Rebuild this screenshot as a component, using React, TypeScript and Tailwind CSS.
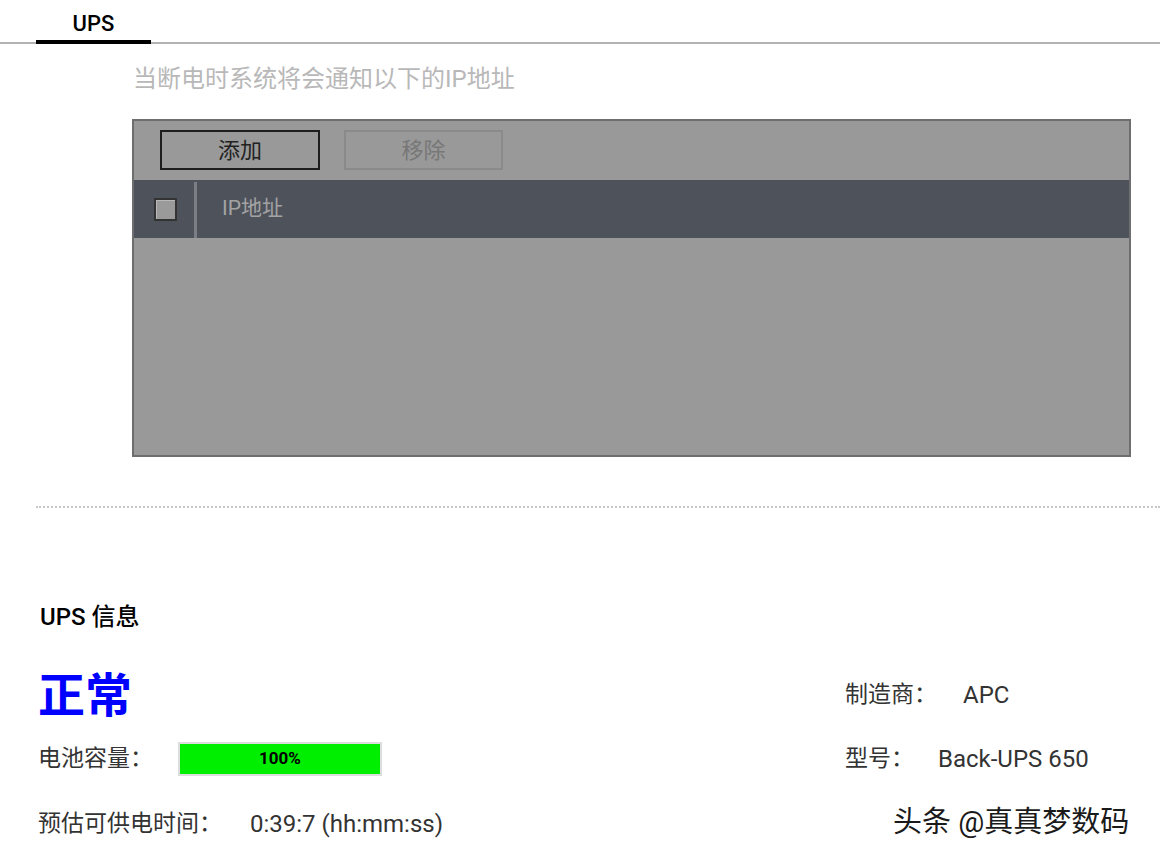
const font = "font-['Roboto','Noto_Sans_CJK_SC',sans-serif]";

function Row({ label, labelW, children }: { label: string; labelW: string; children: React.ReactNode }) {
  return (
    <div className="flex items-center h-full text-[23px] text-[#333]">
      <span className={`${labelW} shrink-0`}>{label}</span>
      {children}
    </div>
  );
}

export default function App() {
  return (
    <div className={`w-[1160px] h-[862px] bg-white overflow-hidden relative ${font}`}>
      {/* Tabs */}
      <div className="h-[44px] border-b-2 border-[#b3b3b3] flex items-start pl-[36px]">
        <div className="w-[115px] h-[44px] border-b-4 border-black pt-[8px] flex justify-center text-[22px] font-medium text-black leading-[32px]">
          UPS
        </div>
      </div>

      <p className="mt-[19px] pl-[133px] text-[24px] leading-[32px] text-[#b8b8b8]">当断电时系统将会通知以下的IP地址</p>

      {/* IP list */}
      <div className="mt-[24px] ml-[132px] w-[999px] h-[338px] border-2 border-[#6e6e6e] bg-[#999999] flex flex-col">
        <div className="flex gap-[24px] pl-[26px] pt-[9px] h-[59px]">
          <button className="w-[160px] h-[40px] border-2 border-[#1e1e1e] text-[22px] text-[#222]">添加</button>
          <button className="w-[159px] h-[40px] border-2 border-[#8a8a8a] text-[22px] text-[#777]">移除</button>
        </div>
        <div className="h-[58px] bg-[#4e525b] flex items-stretch">
          <div className="w-[60px] flex items-center pl-[20px]">
            <div className="w-[23px] h-[23px] border-2 border-[#333] bg-[#9a9a9a] shadow-[inset_1px_1px_0_#b8b8b8]" />
          </div>
          <div className="w-[3px] mt-[2px] bg-[#7b7e84]" />
          <div className="flex items-center pl-[25px] text-[21px] text-[#a3a3a3]">IP地址</div>
        </div>
      </div>

      <div className="mt-[49px] ml-[36px] border-t-2 border-dotted border-[#c8c8c8]" />

      <h2 className="mt-[93px] pl-[40px] text-[24px] leading-[32px] font-medium text-black">UPS 信息</h2>

      {/* Info */}
      <div className="mt-[31px] pl-[38px] grid grid-cols-[807px_1fr] grid-rows-[62px_66px_64px]">
        <div className="flex items-center text-[47px] leading-none font-bold text-[#0000ff]">正常</div>
        <Row label="制造商：" labelW="w-[118px]">
          <span className="text-[24px]">APC</span>
        </Row>
        <Row label="电池容量：" labelW="w-[140px]">
          <div className="w-[204px] h-[34px] border-2 border-[#dddddd] bg-[#00ee00] flex items-center justify-center text-[17px] font-bold text-black">
            100%
          </div>
        </Row>
        <Row label="型号：" labelW="w-[93px]">
          <span className="text-[24px]">Back-UPS 650</span>
        </Row>
        <Row label="预估可供电时间：" labelW="w-[212px]">
          <span className="text-[24px]">0:39:7 (hh:mm:ss)</span>
        </Row>
        <div />
      </div>

      {/* watermark */}
      <div className="absolute left-[893px] top-[804px] text-[29px] leading-[36px] text-[#1a1a1a] [text-shadow:-2px_2px_0_#fff,1px_-1px_0_#fff]">
        头条 @真真梦数码
      </div>
    </div>
  );
}
